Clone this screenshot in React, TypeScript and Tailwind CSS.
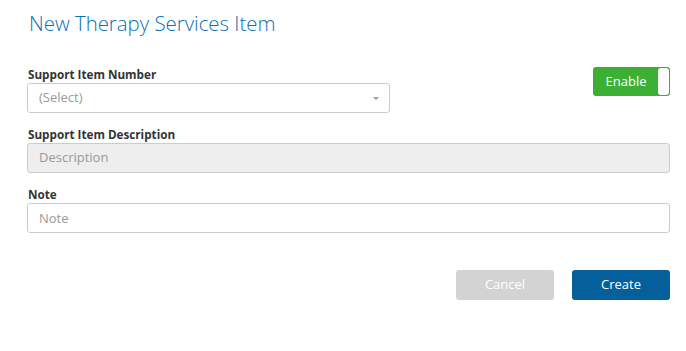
import React, { useState } from 'react';

const font = { fontFamily: '"Open Sans", "Liberation Sans", sans-serif' };

const App: React.FC = () => {
    const [enabled, setEnabled] = useState(true);
    const [note, setNote] = useState('');

    return (
        <div className="w-[686px] h-[351px] bg-white" style={font}>
            <div className="pl-[27px] pr-[16px] pt-[9px]">
                <h1 className="text-[20.4px] leading-[28px] font-light text-[#0b6fb3] pl-[2px]">
                    New Therapy Services Item
                </h1>

                <div className="mt-[29px] flex items-start justify-between">
                    <div className="w-[363px]">
                        <label className="block text-[11.7px] leading-[16px] font-bold text-[#333] pl-[1px]">
                            Support Item Number
                        </label>
                        <div className="mt-[1px] h-[30px] border border-[#ccc] rounded-[3px] flex items-center justify-between pl-[11px] pr-[10px]">
                            <span className="text-[13px] text-[#999]">(Select)</span>
                            <span className="w-0 h-0 border-l-[3px] border-r-[3px] border-t-[3px] border-l-transparent border-r-transparent border-t-[#999]" />
                        </div>
                    </div>

                    <button
                        onClick={() => setEnabled(!enabled)}
                        className="mt-[1px] w-[77px] h-[29px] rounded-[3px] bg-[#3cb034] flex items-stretch p-[1px]"
                    >
                        <span className="flex-1 flex items-center justify-center text-[13px] text-white">
                            Enable
                        </span>
                        <span className="w-[11px] bg-white rounded-[3px]" />
                    </button>
                </div>

                <label className="block mt-[13px] text-[11.7px] leading-[16px] font-bold text-[#333] pl-[1px]">
                    Support Item Description
                </label>
                <div className="mt-[1px] h-[30px] border border-[#ccc] bg-[#eee] rounded-[3px] flex items-center pl-[11px]">
                    <span className="text-[13px] text-[#999]">Description</span>
                </div>

                <label className="block mt-[13px] text-[11.7px] leading-[16px] font-bold text-[#333] pl-[1px]">
                    Note
                </label>
                <input
                    value={note}
                    onChange={(e) => setNote(e.target.value)}
                    placeholder="Note"
                    className="mt-[1px] block w-full h-[30px] border border-[#ccc] rounded-[3px] px-[11px] text-[13px] text-[#333] placeholder-[#999] outline-none"
                />

                <div className="mt-[37px] flex justify-end gap-[18px]">
                    <button className="w-[98px] h-[30px] rounded-[3px] bg-[#d3d3d3] text-white text-[13px]">
                        Cancel
                    </button>
                    <button className="w-[98px] h-[30px] rounded-[3px] bg-[#045f9b] text-white text-[13px]">
                        Create
                    </button>
                </div>
            </div>
        </div>
    );
};

export default App;
